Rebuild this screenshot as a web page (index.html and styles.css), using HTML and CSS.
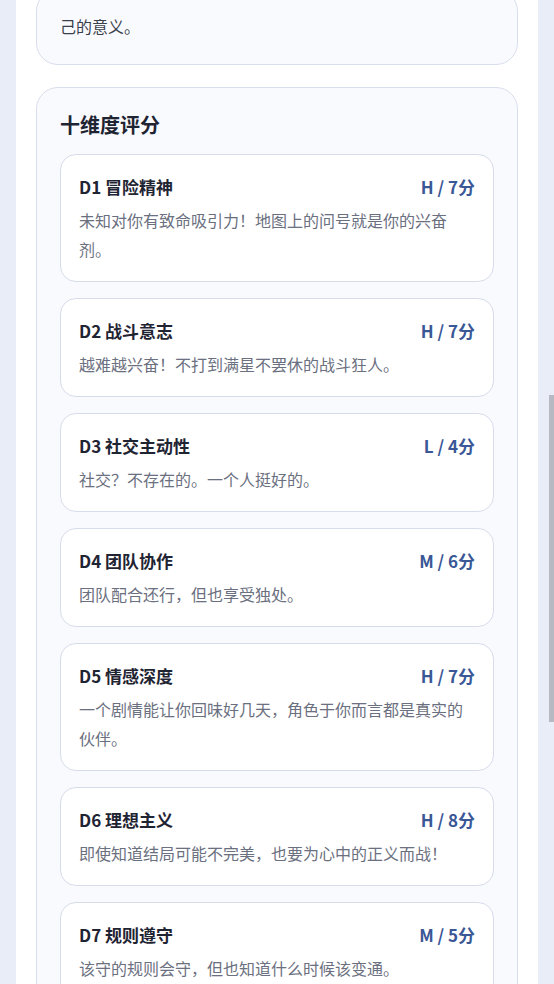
FILE: index.html
```html
<!DOCTYPE html>
<html lang="zh-CN">
<head>
    <meta charset="UTF-8">
    <meta name="viewport" content="width=device-width, initial-scale=1.0">
    <title>十维度评分</title>
    <link rel="stylesheet" href="styles.css">
</head>
<body>
    <div class="page">
        <!-- Summary card (scrolled past) -->
        <div class="card summary">
            <p>己的意义。</p>
        </div>

        <!-- Dimension scores -->
        <div class="card dims">
            <h3>十维度评分</h3>
            <div class="dim-list">
                <div class="dim">
                    <div class="dim-head">
                        <span class="dim-name">D1 冒险精神</span>
                        <span class="dim-score">H / 7分</span>
                    </div>
                    <p class="dim-desc">未知对你有致命吸引力！地图上的问号就是你的兴奋剂。</p>
                </div>
                <div class="dim">
                    <div class="dim-head">
                        <span class="dim-name">D2 战斗意志</span>
                        <span class="dim-score">H / 7分</span>
                    </div>
                    <p class="dim-desc">越难越兴奋！不打到满星不罢休的战斗狂人。</p>
                </div>
                <div class="dim">
                    <div class="dim-head">
                        <span class="dim-name">D3 社交主动性</span>
                        <span class="dim-score">L / 4分</span>
                    </div>
                    <p class="dim-desc">社交？不存在的。一个人挺好的。</p>
                </div>
                <div class="dim">
                    <div class="dim-head">
                        <span class="dim-name">D4 团队协作</span>
                        <span class="dim-score">M / 6分</span>
                    </div>
                    <p class="dim-desc">团队配合还行，但也享受独处。</p>
                </div>
                <div class="dim">
                    <div class="dim-head">
                        <span class="dim-name">D5 情感深度</span>
                        <span class="dim-score">H / 7分</span>
                    </div>
                    <p class="dim-desc">一个剧情能让你回味好几天，角色于你而言都是真实的伙伴。</p>
                </div>
                <div class="dim">
                    <div class="dim-head">
                        <span class="dim-name">D6 理想主义</span>
                        <span class="dim-score">H / 8分</span>
                    </div>
                    <p class="dim-desc">即使知道结局可能不完美，也要为心中的正义而战！</p>
                </div>
                <div class="dim">
                    <div class="dim-head">
                        <span class="dim-name">D7 规则遵守</span>
                        <span class="dim-score">M / 5分</span>
                    </div>
                    <p class="dim-desc">该守的规则会守，但也知道什么时候该变通。</p>
                </div>
            </div>
        </div>
    </div>

    <!-- overlay scrollbar thumb -->
    <div class="scroll-thumb"></div>
</body>
</html>
```

FILE: styles.css
```css
* {
    margin: 0;
    padding: 0;
    box-sizing: border-box;
}

body {
    background: #e9edf7;
    font-family: "Noto Sans CJK SC", "Noto Sans", sans-serif;
    color: #1f2433;
    overflow: hidden;
    height: 984px;
}

/* White page column */
.page {
    width: 522px;
    margin-left: 16px;
    min-height: 1200px;
    padding: 0 20px;
    background: #fff;
    display: flex;
    flex-direction: column;
    gap: 22px;
}

.card {
    background: #f9fafe;
    border: 1px solid #d8deec;
    border-radius: 22px;
}

/* Summary card, top cut off by scroll */
.summary {
    margin-top: -11px;
    padding: 22px 23px 23px;
}

.summary p {
    font-size: 16px;
    line-height: 29px;
    color: #3a3f4c;
}

/* Dimensions card */
.dims {
    padding: 23px 23px 30px;
}

.dims h3 {
    font-size: 20px;
    line-height: 28px;
    font-weight: 700;
    color: #1f2433;
    margin-bottom: 15px;
}

.dim-list {
    display: flex;
    flex-direction: column;
    gap: 16px;
}

.dim {
    background: #fff;
    border: 1px solid #d6dcea;
    border-radius: 16px;
    padding: 19px 18px 17px;
}

.dim-head {
    display: flex;
    justify-content: space-between;
    align-items: center;
    height: 24px;
    margin-bottom: 8px;
}

.dim-name {
    font-size: 17px;
    font-weight: 700;
    color: #1f2433;
}

.dim-score {
    font-size: 17px;
    font-weight: 700;
    color: #3a5796;
}

.dim-desc {
    font-size: 16px;
    line-height: 29px;
    color: #6b7080;
}

/* Scrollbar thumb drawn over the page edge */
.scroll-thumb {
    position: fixed;
    right: 0;
    top: 395px;
    width: 5px;
    height: 327px;
    background: #b6b9c2;
}
```
